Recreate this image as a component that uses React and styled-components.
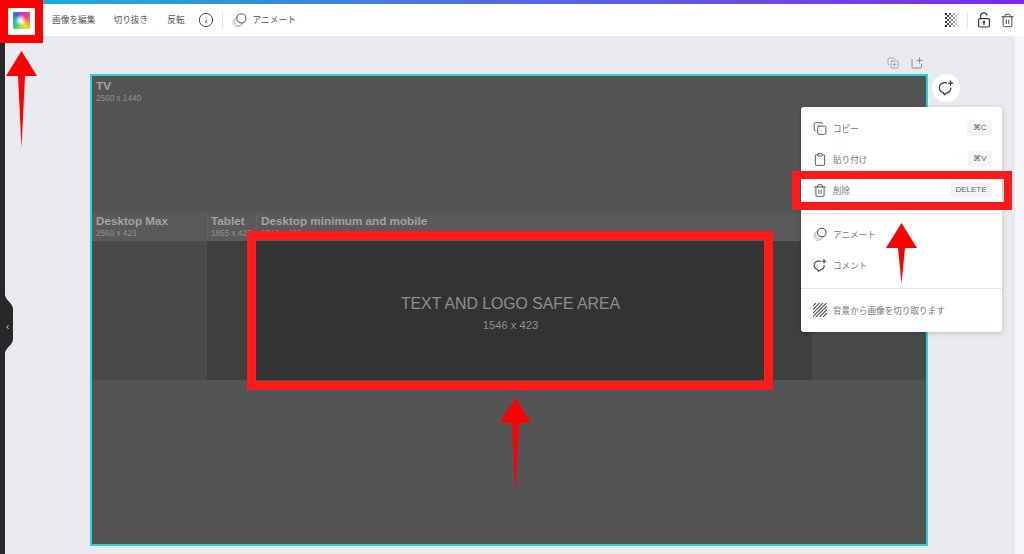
import React from 'react';
import styled, { createGlobalStyle } from 'styled-components';
import { Info, Copy, Clipboard, Trash2, CopyPlus } from 'lucide-react';

const GlobalStyle = createGlobalStyle`
    html, body {
        margin: 0;
        padding: 0;
        background: #e9eaee;
    }
    * {
        box-sizing: border-box;
    }
`;

const JP_FONT = `"Noto Sans CJK JP", "Noto Sans", sans-serif`;
const LABEL_FONT = `"Liberation Sans", Arial, sans-serif`;

const Shell = styled.div`
    position: relative;
    display: flex;
    flex-direction: column;
    width: 1024px;
    height: 554px;
    overflow: hidden;
    font-family: ${JP_FONT};
`;

const GradientBar = styled.div`
    flex: none;
    height: 4px;
    background: linear-gradient(90deg, #16b4cf 0%, #4a78dc 40%, #7d2ae8 100%);
`;

const Toolbar = styled.header`
    flex: none;
    display: flex;
    align-items: center;
    height: 32px;
    padding: 0 9px 0 13px;
    background: #fff;
`;

const Swatch = styled.div`
    width: 17px;
    height: 17px;
    margin-right: 22px;
    border-radius: 1px;
    background:
        radial-gradient(circle at 45% 48%, #fff 0, rgba(255, 255, 255, 0.85) 12%, rgba(255, 255, 255, 0) 45%),
        conic-gradient(#c03fd0 0deg, #f0407a 50deg, #f08a3a 100deg, #e8e040 145deg, #a0e040 190deg, #28d070 235deg, #18b8c8 280deg, #3a60e8 320deg, #c03fd0 360deg);
`;

const ToolText = styled.span`
    font-size: 8.7px;
    line-height: 1;
    color: #555;
    white-space: nowrap;
    margin-right: ${(props) => props.$gap || 0}px;
`;

const ToolIcon = styled.span`
    display: flex;
    align-items: center;
    color: #3a3a3a;
    margin-right: ${(props) => props.$gap || 0}px;
`;

const ToolDivider = styled.span`
    width: 1px;
    height: 17px;
    background: #e4e4e6;
    margin-right: ${(props) => props.$gap || 0}px;
`;

const Spacer = styled.div`
    flex: 1;
`;

const Body = styled.main`
    flex: 1;
    display: flex;
    min-height: 0;
`;

const Rail = styled.aside`
    flex: none;
    width: 5px;
    background: #27282a;
`;

const Workspace = styled.section`
    flex: 1;
    display: flex;
    align-items: flex-start;
    padding-left: 85px;
    background: #e9eaee;
`;

const RightStrip = styled.aside`
    flex: none;
    width: 9px;
    background: #f6f7f9;
`;

const Stage = styled.div`
    flex: none;
    width: 838px;
    display: flex;
    flex-direction: column;
`;

const StageActions = styled.div`
    display: flex;
    justify-content: flex-end;
    gap: 12px;
    height: 38px;
    padding: 21px 5px 0 0;
    color: #8b8d92;
`;

const Artboard = styled.div`
    display: flex;
    flex-direction: column;
    height: 472px;
    border: 2px solid #2bd2da;
    background: #545454;
`;

const OuterZone = styled.div`
    flex: ${(props) => (props.$grow ? 1 : 'none')};
    height: ${(props) => (props.$grow ? 'auto' : '137px')};
    padding: 3px 0 0 4px;
`;

const ZoneTitle = styled.div`
    font-family: ${LABEL_FONT};
    font-size: 11.7px;
    line-height: 14px;
    font-weight: 700;
    color: #a2a2a2;
    white-space: nowrap;
`;

const ZoneSize = styled.div`
    font-family: ${LABEL_FONT};
    font-size: 8.2px;
    line-height: 11px;
    color: #8f8f8f;
    white-space: nowrap;
`;

const LabelBand = styled.div`
    flex: none;
    display: grid;
    grid-template-columns: 115px 49px 1fr;
    height: 28px;
    background: #5a5a5a;
`;

const BandCell = styled.div`
    padding: 1px 0 0 ${(props) => props.$inset}px;
    border-left: ${(props) => (props.$first ? 'none' : '1px solid #626262')};
    overflow: hidden;
`;

const MiddleZone = styled.div`
    flex: none;
    display: grid;
    grid-template-columns: 115px 49px 509px 47px 1fr;
    height: 139px;
`;

const SideBlock = styled.div`
    background: ${(props) => (props.$inner ? '#3f3f3f' : '#4a4a4a')};
`;

const SafeArea = styled.div`
    display: flex;
    flex-direction: column;
    align-items: center;
    justify-content: center;
    gap: 5px;
    padding-top: 5px;
    background: #333;
    font-family: ${LABEL_FONT};
    color: #8e8e8e;
`;

const SafeTitle = styled.div`
    font-size: 15.8px;
    line-height: 18px;
    white-space: nowrap;
`;

const SafeSize = styled.div`
    font-size: 11.2px;
    line-height: 14px;
    white-space: nowrap;
`;

const CommentButton = styled.button`
    flex: none;
    display: flex;
    align-items: center;
    justify-content: center;
    width: 28px;
    height: 28px;
    margin: 38px 0 0 4px;
    padding: 0;
    border: none;
    border-radius: 50%;
    background: #fff;
    color: #3a3a3a;
`;

const Handle = styled.svg`
    position: absolute;
    left: 5px;
    top: 295px;
`;

const Menu = styled.div`
    position: absolute;
    left: 801px;
    top: 107px;
    width: 201px;
    padding: 5.5px 0 6.5px;
    border-radius: 3px;
    background: #fff;
    box-shadow: 0 1px 5px rgba(0, 0, 0, 0.2);
`;

const MenuRow = styled.div`
    display: flex;
    align-items: center;
    height: 31px;
    padding: 0 10px 0 12px;
    color: #444;
`;

const MenuIcon = styled.span`
    display: flex;
    align-items: center;
    justify-content: center;
    flex: none;
    width: 14px;
    margin-right: 6px;
`;

const MenuLabel = styled.span`
    flex: 1;
    font-size: 8.6px;
    line-height: 1;
    color: #777;
    white-space: nowrap;
`;

const Shortcut = styled.span`
    height: 16px;
    padding: 0 5.5px;
    border-radius: 3px;
    background: #f4f4f6;
    font-family: ${LABEL_FONT};
    font-size: 8px;
    line-height: 16px;
    color: #666;
`;

const MenuDivider = styled.div`
    height: 1px;
    margin: 7px 0 5.5px;
    background: #e7e7e9;
`;

const RedBox = styled.div`
    position: absolute;
    left: ${(props) => props.$x}px;
    top: ${(props) => props.$y}px;
    width: ${(props) => props.$w}px;
    height: ${(props) => props.$h}px;
    border: ${(props) => props.$b || 8}px solid ${(props) => props.$color || '#ff1a1a'};
`;

const Arrow = styled.svg`
    position: absolute;
    left: ${(props) => props.$x}px;
    top: ${(props) => props.$y}px;
`;

function RedArrow({ x, y, height }) {
    return (
        <Arrow $x={x} $y={y} width="31" height={height} viewBox={`0 0 31 ${height}`}>
            <path d={`M15.5 0 L31 25 L19 25 L15.5 ${height} L12 25 L0 25 Z`} fill="#ff0000" />
        </Arrow>
    );
}

function AnimateIcon() {
    return (
        <svg width="15" height="15" viewBox="0 0 15 15" fill="none">
            <circle cx="5.4" cy="9.4" r="4.6" stroke="#c9c9c9" strokeWidth="1" />
            <circle cx="6.8" cy="8" r="4.6" fill="#fff" stroke="#a8a8a8" strokeWidth="1" />
            <circle cx="9.4" cy="5.4" r="4.6" fill="#fff" stroke="#555" strokeWidth="1.1" />
        </svg>
    );
}

function CommentIcon({ size = 15 }) {
    return (
        <svg width={size} height={size} viewBox="0 0 15 15" fill="none" stroke="currentColor" strokeWidth="1.2" strokeLinecap="round" strokeLinejoin="round">
            <path d="M8 3 A4.7 4.7 0 1 0 4.9 11.8 L6 13.8 L8 12.2 A4.7 4.7 0 0 0 12 7.6" />
            <path d="M11.8 0.9 V4.9 M9.8 2.9 H13.8" />
        </svg>
    );
}

function UnlockIcon() {
    return (
        <svg width="14" height="16" viewBox="0 0 14 16" fill="none" stroke="currentColor" strokeWidth="1.2" strokeLinecap="round">
            <rect x="1.6" y="6.6" width="10.8" height="8.4" rx="1" />
            <path d="M3.6 6.6 V4 A3.2 3.2 0 0 1 9.9 3.2" />
            <circle cx="7" cy="10" r="1.2" fill="currentColor" stroke="none" />
            <path d="M7 10 V12.6" />
        </svg>
    );
}

function CheckerIcon() {
    const cells = [];
    for (let r = 0; r < 7; r++) {
        for (let c = 0; c < 7; c++) {
            if ((r + c) % 2 === 0) {
                cells.push(<rect key={`${r}-${c}`} x={c * 2} y={r * 2} width="2" height="2" fill="#2f2f2f" opacity={1 - c * 0.14} />);
            }
        }
    }
    return <svg width="14" height="14" viewBox="0 0 14 14">{cells}</svg>;
}

function HatchIcon() {
    return (
        <svg width="14" height="14" viewBox="0 0 14 14" stroke="#555" strokeWidth="1.1">
            <path d="M0 3 L3 0 M0 6.5 L6.5 0 M0 10 L10 0 M0 13.5 L13.5 0 M3 14 L14 3 M6.5 14 L14 6.5 M10 14 L14 10" />
        </svg>
    );
}

function AddPageIcon() {
    return (
        <svg width="12" height="12" viewBox="0 0 12 12" fill="none" stroke="currentColor" strokeWidth="1" strokeLinecap="round">
            <path d="M1 2.5 V10 A1 1 0 0 0 2 11 H9.5 A1 1 0 0 0 10.5 10 V7" />
            <path d="M8.5 0.8 V6 M6 3.4 H11.2" />
        </svg>
    );
}

const MENU_TOP = [
    { icon: <Copy size={15} strokeWidth={1.5} />, label: 'コピー', key: '⌘C' },
    { icon: <Clipboard size={15} strokeWidth={1.5} />, label: '貼り付け', key: '⌘V' },
    { icon: <Trash2 size={15} strokeWidth={1.5} />, label: '削除', key: 'DELETE' },
];

export default function App() {
    return (
        <Shell>
            <GlobalStyle />
            <GradientBar />
            <Toolbar>
                <Swatch />
                <ToolText $gap={18}>画像を編集</ToolText>
                <ToolText $gap={19}>切り抜き</ToolText>
                <ToolText $gap={13}>反転</ToolText>
                <ToolIcon $gap={8}><Info size={16} strokeWidth={1.4} /></ToolIcon>
                <ToolDivider $gap={9} />
                <ToolIcon $gap={6}><AnimateIcon /></ToolIcon>
                <ToolText>アニメート</ToolText>
                <Spacer />
                <ToolIcon $gap={8}><CheckerIcon /></ToolIcon>
                <ToolDivider $gap={9} />
                <ToolIcon $gap={9}><UnlockIcon /></ToolIcon>
                <ToolIcon><Trash2 size={15} strokeWidth={1.5} /></ToolIcon>
            </Toolbar>
            <Body>
                <Rail />
                <Workspace>
                    <Stage>
                        <StageActions>
                            <CopyPlus size={12} strokeWidth={1.3} />
                            <AddPageIcon />
                        </StageActions>
                        <Artboard>
                            <OuterZone>
                                <ZoneTitle>TV</ZoneTitle>
                                <ZoneSize>2560 x 1440</ZoneSize>
                            </OuterZone>
                            <LabelBand>
                                <BandCell $first $inset={4}>
                                    <ZoneTitle>Desktop Max</ZoneTitle>
                                    <ZoneSize>2560 x 423</ZoneSize>
                                </BandCell>
                                <BandCell $inset={3}>
                                    <ZoneTitle>Tablet</ZoneTitle>
                                    <ZoneSize>1855 x 423</ZoneSize>
                                </BandCell>
                                <BandCell $inset={4}>
                                    <ZoneTitle>Desktop minimum and mobile</ZoneTitle>
                                    <ZoneSize>1546 x 423</ZoneSize>
                                </BandCell>
                            </LabelBand>
                            <MiddleZone>
                                <SideBlock />
                                <SideBlock $inner />
                                <SafeArea>
                                    <SafeTitle>TEXT AND LOGO SAFE AREA</SafeTitle>
                                    <SafeSize>1546 x 423</SafeSize>
                                </SafeArea>
                                <SideBlock $inner />
                                <SideBlock />
                            </MiddleZone>
                            <OuterZone $grow />
                        </Artboard>
                    </Stage>
                    <CommentButton><CommentIcon size={16} /></CommentButton>
                </Workspace>
                <RightStrip />
            </Body>

            <Handle width="8" height="58" viewBox="0 0 8 58">
                <path d="M0 0 C1 6 8 8 8 14 V44 C8 50 1 52 0 58 Z" fill="#27282a" />
                <path d="M3.6 30 L1.8 32 L3.6 34" fill="none" stroke="#c4c4c4" strokeWidth="1" />
            </Handle>

            <Menu>
                {MENU_TOP.map((item) => (
                    <MenuRow key={item.label}>
                        <MenuIcon>{item.icon}</MenuIcon>
                        <MenuLabel>{item.label}</MenuLabel>
                        <Shortcut>{item.key}</Shortcut>
                    </MenuRow>
                ))}
                <MenuDivider />
                <MenuRow>
                    <MenuIcon><AnimateIcon /></MenuIcon>
                    <MenuLabel>アニメート</MenuLabel>
                </MenuRow>
                <MenuRow>
                    <MenuIcon><CommentIcon /></MenuIcon>
                    <MenuLabel>コメント</MenuLabel>
                </MenuRow>
                <MenuDivider />
                <MenuRow>
                    <MenuIcon><HatchIcon /></MenuIcon>
                    <MenuLabel>背景から画像を切り取ります</MenuLabel>
                </MenuRow>
            </Menu>

            <RedBox $x={0} $y={0} $w={43} $h={43} $color="#ff0000" />
            <RedBox $x={247} $y={231} $w={526} $h={159} $b={9} />
            <RedBox $x={792} $y={171} $w={220} $h={39} />
            <RedArrow x={6} y={51} height={97} />
            <RedArrow x={886} y={223} height={61} />
            <RedArrow x={500} y={398} height={97} />
        </Shell>
    );
}
